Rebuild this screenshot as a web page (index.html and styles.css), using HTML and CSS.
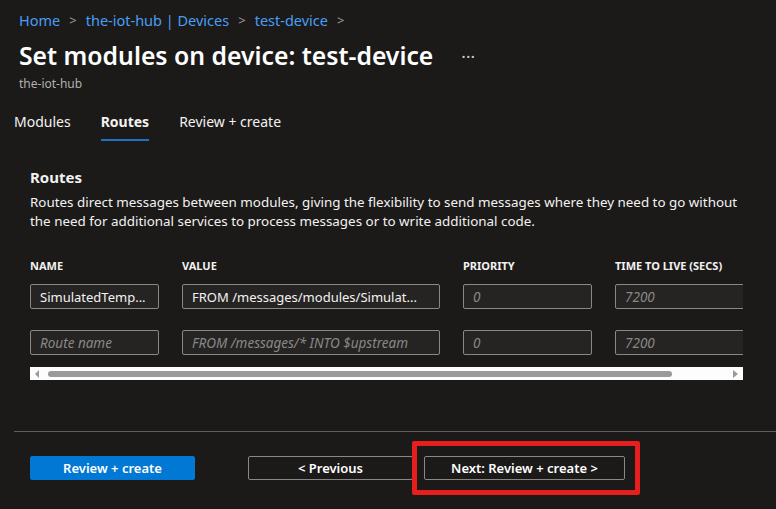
FILE: index.html
```html
<!DOCTYPE html>
<html>
<head>
<meta charset="utf-8">
<link rel="stylesheet" href="styles.css">
</head>
<body>
<div class="page">
  <header class="header">
    <nav class="crumbs">
      <a class="crumb">Home</a><span class="sep">&gt;</span>
      <a class="crumb">the-iot-hub | Devices</a><span class="sep">&gt;</span>
      <a class="crumb">test-device</a><span class="sep">&gt;</span>
    </nav>
    <div class="title-row">
      <h1 class="title">Set modules on device: test-device</h1>
      <span class="more">···</span>
    </div>
    <div class="subtitle">the-iot-hub</div>
  </header>

  <div class="tabs">
    <span class="tab">Modules</span>
    <span class="tab active">Routes</span>
    <span class="tab">Review + create</span>
  </div>

  <section class="content">
    <h2 class="section-title">Routes</h2>
    <p class="desc">Routes direct messages between modules, giving the flexibility to send messages where they need to go without the need for additional services to process messages or to write additional code.</p>

    <div class="table-wrap">
      <div class="grid">
        <div class="th">NAME</div>
        <div class="th">VALUE</div>
        <div class="th">PRIORITY</div>
        <div class="th">TIME TO LIVE (SECS)</div>

        <div class="input">SimulatedTemp...</div>
        <div class="input">FROM /messages/modules/Simulat...</div>
        <div class="input ph">0</div>
        <div class="input ph">7200</div>

        <div class="input ph">Route name</div>
        <div class="input ph">FROM /messages/* INTO $upstream</div>
        <div class="input ph">0</div>
        <div class="input ph">7200</div>
      </div>
      <div class="scrollbar">
        <span class="arrow left"></span>
        <span class="thumb"></span>
        <span class="arrow right"></span>
      </div>
    </div>
  </section>

  <footer class="footer">
    <button class="btn primary">Review + create</button>
    <button class="btn prev">&lt; Previous</button>
    <span class="highlight-wrap">
      <button class="btn next">Next: Review + create &gt;</button>
      <span class="highlight"></span>
    </span>
  </footer>
</div>
</body>
</html>
```

FILE: styles.css
```css
* { box-sizing: border-box; }
html, body {
  margin: 0;
  padding: 0;
  background: #1b1a19;
  color: #f3f2f1;
  font-family: "Noto Sans", "Open Sans", sans-serif;
}
.page {
  width: 776px;
  height: 509px;
  overflow: hidden;
}
.header {
  padding: 10px 0 0 19px;
}
.crumbs {
  display: flex;
  align-items: center;
  font-size: 14.5px;
  line-height: 20px;
  height: 20px;
}
.crumb {
  color: #479ef5;
}
.sep {
  color: #a19f9d;
  margin: 0 9px;
  font-size: 13px;
}
.title-row {
  display: flex;
  align-items: center;
  margin-top: 9px;
  height: 34px;
}
.title {
  margin: 0;
  font-size: 24.75px;
  font-weight: 600;
  line-height: 34px;
  color: #ffffff;
}
.more {
  margin-left: 28px;
  font-size: 17px;
  line-height: 20px;
  margin-top: 2px;
  color: #d0d0d0;
}
.subtitle {
  font-size: 12px;
  color: #b3b0ad;
  line-height: 16px;
  margin-top: 3px;
}
.tabs {
  display: flex;
  padding-left: 14px;
  margin-top: 18px;
  height: 31px;
}
.tab {
  font-size: 14px;
  line-height: 20px;
  padding-top: 2px;
  margin-right: 30px;
  color: #f3f2f1;
  height: 31px;
}
.tab.active {
  font-weight: 700;
  border-bottom: 2px solid #1f6fc5;
}
.content {
  padding: 26px 0 0 30px;
}
.section-title {
  margin: 0;
  font-size: 15px;
  font-weight: 700;
  line-height: 20px;
}
.desc {
  margin: 6px 0 0 0;
  font-size: 13.4px;
  line-height: 19px;
  width: 713px;
  color: #f3f2f1;
}
.table-wrap {
  width: 713px;
  margin-top: 28px;
}
.grid {
  display: grid;
  grid-template-columns: 129px 258px 129px 140px;
  column-gap: 23px;
  row-gap: 21px;
  overflow: hidden;
  width: 713px;
}
.th {
  font-size: 11px;
  font-weight: 700;
  line-height: 14px;
  height: 14px;
  margin-bottom: -10px;
  color: #f3f2f1;
}
.input {
  height: 25px;
  border: 1px solid #8a8886;
  border-radius: 2px;
  background: #252423;
  font-size: 13px;
  line-height: 24px;
  padding-left: 9px;
  white-space: nowrap;
  overflow: hidden;
  color: #f3f2f1;
}
.input.ph {
  font-style: italic;
  font-size: 13.5px;
  color: #8a8886;
}
.scrollbar {
  margin-top: 12px;
  height: 13px;
  background: #fdfdfd;
  display: flex;
  align-items: center;
}
.arrow {
  width: 0;
  height: 0;
  border-top: 4px solid transparent;
  border-bottom: 4px solid transparent;
}
.arrow.left {
  border-right: 4px solid #9a9a9a;
  margin-left: 5px;
}
.arrow.right {
  border-left: 5px solid #9a9a9a;
  margin-left: 61px;
}
.thumb {
  display: block;
  margin-left: 9px;
  width: 624px;
  height: 6px;
  border-radius: 3px;
  background: #9a9a9a;
}
.footer {
  margin: 51px 0 0 14px;
  border-top: 1px solid #605e5c;
  display: flex;
  align-items: flex-start;
  padding: 24px 0 0 16px;
}
.btn {
  height: 24px;
  font-family: inherit;
  font-size: 13px;
  font-weight: 600;
  color: #ffffff;
  border-radius: 2px;
  padding: 0;
  line-height: 22px;
}
.btn.primary {
  width: 165px;
  background: #0078d4;
  border: 1px solid #0078d4;
}
.btn.prev {
  width: 165px;
  margin-left: 53px;
  background: #1b1a19;
  border: 1px solid #8a8886;
}
.highlight-wrap {
  position: relative;
  margin-left: 11px;
}
.btn.next {
  width: 201px;
  background: #1b1a19;
  border: 1px solid #8a8886;
}
.highlight {
  position: absolute;
  left: -12px;
  top: -15px;
  width: 228px;
  height: 54px;
  border: 5px solid #e61e1e;
  border-radius: 2px;
}
```
